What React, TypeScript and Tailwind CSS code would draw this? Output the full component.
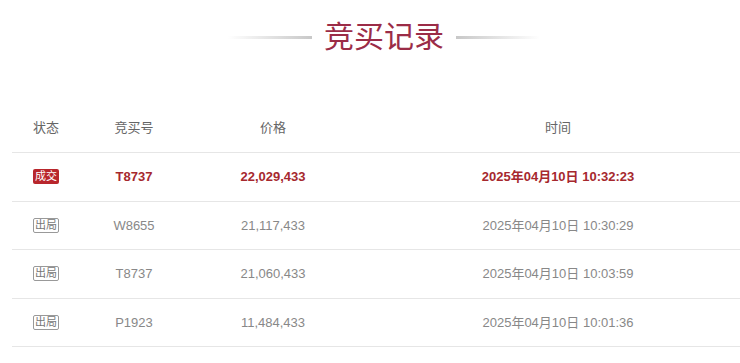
const rows = [
  { status: "成交", no: "T8737", price: "22,029,433", time: "2025年04月10日 10:32:23", win: true },
  { status: "出局", no: "W8655", price: "21,117,433", time: "2025年04月10日 10:30:29", win: false },
  { status: "出局", no: "T8737", price: "21,060,433", time: "2025年04月10日 10:03:59", win: false },
  { status: "出局", no: "P1923", price: "11,484,433", time: "2025年04月10日 10:01:36", win: false },
];

const cols = "grid grid-cols-[68px_108px_170px_400px] items-center text-center";

export default function App() {
  return (
    <div
      className="w-[740px] h-[363px] overflow-hidden bg-white"
      style={{ fontFamily: '"Liberation Sans", "Noto Sans CJK SC", sans-serif' }}
    >
      <div className="h-[74px] pl-[28px] flex items-center justify-center gap-[12px]">
        <div className="w-[84px] h-[3px] bg-gradient-to-r from-white to-[#c8c8c8]" />
        <h1 className="text-[30px] leading-none text-[#9b2c47] pb-[1px]">竞买记录</h1>
        <div className="w-[84px] h-[3px] bg-gradient-to-l from-white to-[#c8c8c8]" />
      </div>

      <div className="pl-[12px] pt-[30px]">
        <div className="w-[746px]">
          <div className={`${cols} h-[48px] text-[13px] text-[#666]`}>
            <span>状态</span>
            <span>竞买号</span>
            <span>价格</span>
            <span>时间</span>
          </div>
          {rows.map((r, i) => (
            <div
              key={i}
              className={`${cols} h-[48.5px] border-t border-[#e6e6e6] text-[13px] ${
                r.win ? "text-[#a6282e] font-bold" : "text-[#888]"
              }`}
            >
              <span className="flex justify-center">
                {r.win ? (
                  <span className="px-[2px] h-[15px] leading-[15px] text-[11px] font-normal text-white bg-[#b8262c] rounded-[2px]">
                    {r.status}
                  </span>
                ) : (
                  <span className="px-[1px] h-[15px] leading-[13px] text-[11px] text-[#777] border border-[#999] rounded-[2px]">
                    {r.status}
                  </span>
                )}
              </span>
              <span>{r.no}</span>
              <span>{r.price}</span>
              <span>{r.time}</span>
            </div>
          ))}
          <div className="border-t border-[#e6e6e6]" />
        </div>
      </div>
    </div>
  );
}
